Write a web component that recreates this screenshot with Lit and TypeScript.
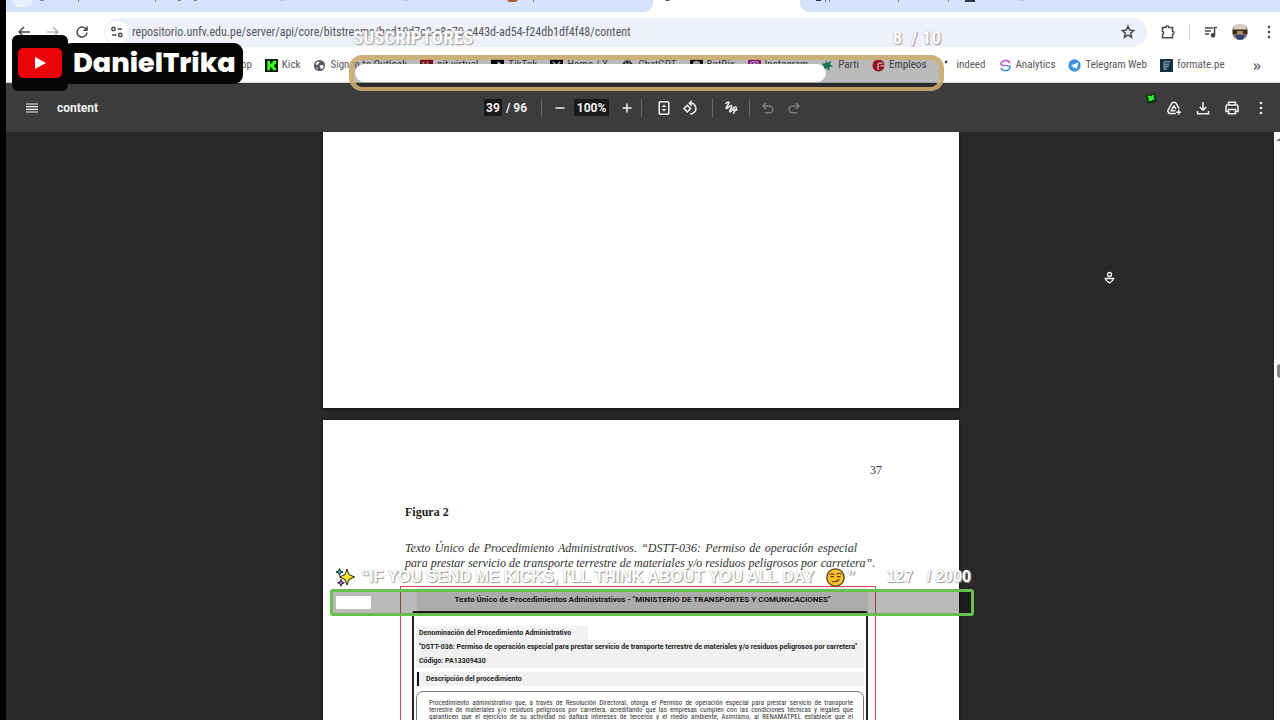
import { LitElement, html, css, svg } from "lit";
import { customElement, property } from "lit/decorators.js";

const icons: Record<string, unknown> = {
  back: svg`<path d="M14 8H3M8 3L3 8l5 5"/>`,
  forward: svg`<path d="M2 8h11M8 3l5 5-5 5"/>`,
  reload: svg`<path d="M12.6 6A5 5 0 1 0 13 8.6M13 2.5V6.200H9.300"/>`,
  tune: svg`<circle cx="4.500" cy="5" r="1.700"/><path d="M8.500 5H13M3 11h4.500"/><circle cx="11.300" cy="11" r="1.700"/>`,
  star: svg`<path d="M8 2.400l1.700 3.700 4 .4-3 2.700.9 4L8 11.100l-3.600 2.100.9-4-3-2.700 4-.4z"/>`,
  puzzle: svg`<path d="M2.500 3.500h3.300a1.500 1.500 0 0 1 3 0h3.700v3.700a1.500 1.500 0 0 1 0 3v3.600h-10v-3.600a1.600 1.600 0 0 0 0-3z"/>`,
  music: svg`<path d="M2 4h8M2 7h6M2 10h4M11.500 11V3.500H14"/><circle cx="10" cy="11.300" r="1.600" fill="currentColor"/>`,
  more: svg`<g fill="currentColor" stroke="none"><circle cx="8" cy="3" r="1.300"/><circle cx="8" cy="8" r="1.300"/><circle cx="8" cy="13" r="1.300"/></g>`,
  menu: svg`<path d="M2 4h12M2 6.700h12M2 9.300h12M2 12h12" stroke-width="1.200"/>`,
  minus: svg`<path d="M3.500 8h9"/>`,
  plus: svg`<path d="M3.500 8h9M8 3.500v9"/>`,
  fit: svg`<rect x="3.200" y="1.700" width="9.600" height="12.600" rx="1.200"/><path d="M6.400 6.600L8 4.800l1.600 1.800zM6.400 9.400L8 11.200l1.600-1.800z" fill="currentColor" stroke-width=".8"/>`,
  rotate: svg`<path d="M5.300 5.300L8.600 8.600 5.300 11.900 2 8.600z"/><path d="M7.500 3.200a5.400 5.400 0 1 1 .8 10.700M9.700.8L7.300 3.200l2.400 2.400"/>`,
  ink: svg`<path d="M2.500 3.800C4 2.300 6 1.300 6 2.800 6 4.500 2.500 7 3.200 8.300c.9 1.200 4-3.600 5.400-2.600 1.400 1.200-2.800 4.600-1.700 6 1.200 1.300 3-4.700 5.300-4.800 1.900.1 1.300 2.600-.3 4-1.500 1.200-1.300 2.300-.7 2.900M10 9.900h4.500"/>`,
  undo: svg`<path d="M3 6h6.500a3.400 3.400 0 0 1 0 6.800H5M6 3L3 6l3 3"/>`,
  redo: svg`<path d="M13 6H6.500a3.400 3.400 0 0 0 0 6.800H11M10 3l3 3-3 3"/>`,
  drive: svg`<path d="M9.800 13.500H3.200L1.700 11 6.300 2.500h3.300l3.500 6.200M8 5.700L5.200 10.700h4.200M8 5.700l1.900 3.500M12.700 9.700v5M10.200 12.200h5"/>`,
  download: svg`<path d="M8 2v8M4.700 7L8 10.300 11.300 7M2.500 11v2.800h11V11"/>`,
  print: svg`<path d="M4.500 5V2.300h7V5M4.500 11.500H2V6.700C2 5.700 2.700 5 3.600 5h8.800c.9 0 1.600.7 1.600 1.700v4.800h-2.500M4.500 9.500h7v4.300h-7z"/>`,
};

const favicons: Record<string, unknown> = {
  kick: svg`<path fill="#0b1a06" d="M0 0h14v14H0z"/><path fill="#3dfb20" d="M2.500 2h3v3H7V3.500h1.500V2H12v3.500h-1.500V7H9.500v1h1v1.500H12V12H8.500v-1.500H7V9H5.500v3h-3z"/>`,
  globe: svg`<circle cx="7" cy="7" r="6" fill="#55585c"/><path fill="#fff" d="M2.500 5l3-2.500 1.500 1-1 2-2 1zM7 7l3-.5 2 1-2 3.500-2-1zM3 8.500l2 1 .5 2z"/>`,
  nit: svg`<path fill="#a3122b" d="M0 0h14v14H0z"/><path fill="#e7b8bf" d="M2 3h2l1 2-1 2zM7 3h2v2H7z"/>`,
  tiktok: svg`<path fill="#050505" d="M0 0h14v14H0z"/><path fill="#fff" d="M7 3h2c.2 1.200 1 2 2 2v1.800L9 6.200v2.600A2.600 2.600 0 1 1 6.400 6.200v1.500a1 1 0 1 0 .6 1z"/>`,
  x: svg`<path fill="#050505" d="M0 0h14v14H0z"/><path stroke="#fff" stroke-width="1.300" fill="none" d="M3 3l7.500 8M11 3l-8 8"/>`,
  gpt: svg`<g fill="none" stroke="#3b3d40" stroke-width="1.200"><circle cx="7" cy="7" r="5"/><path d="M3 5l4-2 4 2.500v4L7 11 3 9zM7 3v4l4 2.500M7 7L3 9"/></g>`,
  botrix: svg`<path fill="#171717" d="M0 0h14v14H0z"/><circle cx="7" cy="6" r="4" fill="#d9cfc7"/><path fill="#8b4f55" d="M4 6h6v4H4z"/>`,
  insta: svg`<rect width="14" height="14" rx="3" fill="#b81fa4"/><g fill="none" stroke="#fff" stroke-width="1.200"><rect x="3" y="3" width="8" height="8" rx="2"/><circle cx="7" cy="7" r="2"/></g>`,
  parti: svg`<path fill="#25a37c" d="M5 1l2 3 4-2-1 4 3 2-4 1v4L6 10l-4 2 1-4-2-3 4-.5z"/>`,
  empleos: svg`<circle cx="7" cy="7" r="6.500" fill="#d3142c"/><path fill="none" stroke="#fff" stroke-width="1.400" d="M11.500 4.500H8a2 2 0 0 0-1 3.500 2 2 0 0 0 .5 3.500M9 7.500h5"/>`,
  indeed: svg`<path fill="#444" d="M6 2h3v2L7 5z"/>`,
  analytics: svg`<g fill="none" stroke-width="1.700"><path stroke="#c653d8" d="M12 4.500A5.500 5.500 0 0 0 2 5c0 2 3 2 5 2"/><path stroke="#4a9ade" d="M2 9.500A5.500 5.500 0 0 0 12 9c0-2-3-2-5-2"/></g>`,
  telegram: svg`<circle cx="7" cy="7" r="6.600" fill="#3f8fd8"/><path fill="#fff" d="M3 7l8-3.300L9.500 10.800 7 9l-1.300 1.200L5.500 8z"/>`,
  formate: svg`<path fill="#12303f" d="M0 0h14v14H0z"/><path fill="none" stroke="#a9bcc6" d="M4.500 12V3H11M6.500 12V5.500H10M7 8h2.500"/>`,
};

const bookmarks: [string, string][] = [
  ["kick", "Kick"], ["globe", "Sign in to Outlook"], ["nit", "nit-virtual"], ["tiktok", "TikTok"],
  ["x", "Home / X"], ["gpt", "ChatGPT"], ["botrix", "BotRix"], ["insta", "Instagram"], ["parti", "Parti"],
  ["empleos", "Empleos"], ["indeed", "indeed"], ["analytics", "Analytics"], ["telegram", "Telegram Web"],
  ["formate", "formate.pe"],
];

const icon = (name: string) => html`<svg class="icon" viewBox="0 0 16 16" aria-hidden="true">${icons[name]}</svg>`;
const iconButton = (name: string, label: string, cls = "") =>
  html`<button class="ib ${cls}" aria-label=${label}>${icon(name)}</button>`;

const shared = css`
  * { box-sizing: border-box; }
  button { border: 0; padding: 0; background: none; color: inherit; font: inherit; }
  .ib { display: grid; place-items: center; width: 16px; height: 16px; flex: none; }
  .icon { width: 16px; height: 16px; fill: none; stroke: currentColor; stroke-width: 1.500; display: block; }
`;

@customElement("browser-chrome")
export class BrowserChrome extends LitElement {
  static styles = [shared, css`
    :host { display: block; background: #fff; font-family: "Roboto Condensed", Roboto, sans-serif; color: #46494d; border-bottom: 1px solid #d5d7da; }
    .tabs { display: grid; grid-template-columns: 647fr 147fr 480fr; height: 12px; background: #fff; }
    .group { background: #d5e2fb; display: flex; align-items: flex-start; }
    .group.first { border-bottom-right-radius: 9px; padding-left: 6px; }
    .group.last { border-bottom-left-radius: 9px; }
    .active { padding-left: 12px; }
    .search { width: 21px; height: 7px; border-radius: 0 0 9px 9px; background: #e9f0fd; }
    .marks { flex: 1; height: 3px; min-width: 0; }
    .marks svg, .active svg { display: block; width: 100%; height: 3px; }
    .bar { display: flex; align-items: center; height: 40px; padding: 0 3px 0 10px; }
    .nav { display: flex; gap: 13px; margin-right: 14px; }
    .dim { color: #b4b6b9; }
    .omni { flex: 1; min-width: 0; height: 29px; border-radius: 15px; background: #eef1fa; display: flex; align-items: center; padding: 0 11px 0 1px; }
    .site { width: 23px; height: 23px; border-radius: 50%; background: #fff; display: grid; place-items: center; flex: none; }
    .url { flex: 1; min-width: 0; border: 0; background: none; outline: 0; padding: 0; margin-left: 4px; font: 12px/16px "Roboto Condensed", Roboto, sans-serif; color: #55585e; }
    .tools { display: flex; align-items: center; gap: 13px; margin-left: 13px; }
    .sep { width: 1px; height: 14px; background: #cfd5e4; }
    .avatar { width: 16px; height: 16px; display: block; }
    .marksbar { display: flex; align-items: center; height: 30px; padding: 0 19px 4px 235px; font-size: 11px; line-height: 16px; }
    .list { flex: 1; min-width: 0; display: flex; gap: 13px; overflow: hidden; }
    a { display: flex; align-items: center; gap: 4px; color: #55585c; text-decoration: none; white-space: nowrap; }
    .fav { width: 13px; height: 13px; display: block; }
    .more { font: 16px/16px "Open Sans", sans-serif; }
  `];
  render() {
    return html`
      <div class="tabs">
        <div class="group first"><div class="search"></div><div class="marks">
          <svg viewBox="0 0 620 3" preserveAspectRatio="none"><g fill="#7b8496"><path d="M7 0h4v1H7zM45 0h1v2h-1zM122 0h1v2h-1zM145 0h3v1h-3zM161 0h3v1h-3zM248 0h1v1h-1zM373 0h1v1h-1zM500 0h1v2h-1z"/></g><path fill="#b5583a" d="M474 0h11l-2 2h-7z"/></svg>
        </div></div>
        <div class="active"><svg viewBox="0 0 135 3" preserveAspectRatio="none"><path fill="#555" d="M0 0h5l-1 1H1z"/></svg></div>
        <div class="group last"><div class="marks">
          <svg viewBox="0 0 480 3" preserveAspectRatio="none"><g fill="#7b8496"><path d="M25 0h1v2h-1zM29 0h1v2h-1zM98 0h1v2h-1zM148 0h1v2h-1zM169 0h4v1h-4zM222 0h1v1h-1z"/></g><path fill="#2d3340" d="M16 0h5v1h-5zM165 0h10v2h-10z" /></svg>
        </div></div>
      </div>
      <div class="bar">
        <div class="nav">${iconButton("back", "Back")}${iconButton("forward", "Forward", "dim")}${iconButton("reload", "Reload")}</div>
        <div class="omni">
          <div class="site">${iconButton("tune", "Site information")}</div>
          <input class="url" aria-label="Address" .value=${"repositorio.unfv.edu.pe/server/api/core/bitstreams/bad10d7e2-c8a70-c443d-ad54-f24db1df4f48/content"}>
          ${iconButton("star", "Bookmark this page")}
        </div>
        <div class="tools">
          ${iconButton("puzzle", "Extensions")}<div class="sep"></div>${iconButton("music", "Media controls")}
          <svg class="avatar" viewBox="0 0 16 16"><circle cx="8" cy="8" r="8" fill="#8a7a6c"/><path fill="#d8d2c6" d="M2 5a6 6 0 0 1 12 0z"/><path fill="#3b2c26" d="M1 6h14v4H1z"/><path fill="#b98a6c" d="M5 7h6v3H5z"/><path fill="#2b4873" d="M3 11h10l-2 4.500H5.500z"/></svg>
          ${iconButton("more", "Menu")}
        </div>
      </div>
      <div class="marksbar">
        <nav class="list"><a href="#">pp</a>${bookmarks.map(([k, t]) => html`<a href="#"><svg class="fav" viewBox="0 0 14 14">${favicons[k]}</svg>${t}</a>`)}</nav>
        <button class="more" aria-label="More bookmarks">»</button>
      </div>`;
  }
}

@customElement("pdf-toolbar")
export class PdfToolbar extends LitElement {
  static styles = [shared, css`
    :host { display: grid; grid-template-columns: 1fr auto 1fr; align-items: center; height: 49px; background: #3c3c3c; color: #f1f1f1; font: bold 12px/16px Roboto, sans-serif; padding: 0 11px 0 18px; }
    .side, .mid { display: flex; align-items: center; }
    .side { gap: 17px; }
    .end { justify-content: flex-end; gap: 13px; }
    .mid { gap: 10px; margin-left: -7px; }
    .pages { display: flex; align-items: center; gap: 4px; margin-right: 4px; }
    input { border: 0; padding: 0; background: #191919; color: #f1f1f1; font: inherit; height: 17px; text-align: center; }
    .page { width: 18px; }
    .zoom { width: 35px; }
    .small { width: 12px; }
    .sep { width: 1px; height: 18px; background: #6b6b6b; }
    .dim { color: #7d7d7d; }
    .first { margin-left: 4px; }
    .last { margin-right: 4px; }
  `];
  render() {
    return html`
      <div class="side">${iconButton("menu", "Sidebar")}<span>content</span></div>
      <div class="mid">
        <label class="pages"><input class="page" aria-label="Page" .value=${"39"}><span>/ 96</span></label>
        <div class="sep"></div>
        ${iconButton("minus", "Zoom out", "small")}
        <input class="zoom" aria-label="Zoom" .value=${"100%"}>
        ${iconButton("plus", "Zoom in", "small")}
        <div class="sep"></div>
        ${iconButton("fit", "Fit to page", "first")}${iconButton("rotate", "Rotate", "last")}
        <div class="sep"></div>
        ${iconButton("ink", "Draw")}
        <div class="sep"></div>
        ${iconButton("undo", "Undo", "dim")}${iconButton("redo", "Redo", "dim")}
      </div>
      <div class="side end">${iconButton("drive", "Save to Drive")}${iconButton("download", "Download")}${iconButton("print", "Print")}${iconButton("more", "More")}</div>`;
  }
}

@customElement("pdf-viewer")
export class PdfViewer extends LitElement {
  static styles = [shared, css`
    :host { display: flex; overflow: hidden; background: #282828; min-height: 0; }
    .pages { flex: 1; min-width: 0; display: flex; flex-direction: column; align-items: center; gap: 12px; padding-left: 2px; }
    .sheet { width: 636px; max-width: 100%; background: #fff; flex: none; box-shadow: 0 1px 3px #111; }
    .blank { height: 276px; }
    .doc { padding: 43px 77px 0 82px; font: 12px/14px "Liberation Serif", serif; color: #333; }
    .num { text-align: right; margin: 0 0 28px; }
    h2 { font: bold 12px/14px "Liberation Serif", serif; color: #222; margin: 0 0 22px; }
    .cap { font-style: italic; line-height: 15px; margin: 0 0 15px; white-space: nowrap; width: 452px; }
    .cap span { display: block; }
    .cap .just { white-space: normal; text-align-last: justify; }
    .fig { width: 476px; margin-left: -5px; border: 1px solid #d8485a; border-bottom: 0; padding: 0 7px 0 11px; font: bold 7px/14px Roboto, sans-serif; color: #222; }
    .head { margin: 0 0 0 5px; background: #ececec; font-size: 8px; line-height: 22px; padding-top: 2px; text-align: center; }
    .box { border: 2px solid #222; border-bottom: 0; border-radius: 3px 3px 0 0; padding: 13px 2px 0; }
    .box p { margin: 0; padding-left: 3px; white-space: nowrap; }
    .box .name { width: 172px; background: #f3f3f3; }
    .gray { background: #f1f1f1; margin-bottom: 4px; }
    .desc { display: flex; background: #f1f1f1; margin-bottom: 5px; }
    .desc::before { content: ""; width: 2px; background: #111; margin-left: 1px; }
    .desc p { padding-left: 7px; }
    .text { border: 1px solid #777; border-radius: 7px 7px 0 0; padding: 8px 10px 0 12px; font: 7px/7px "Roboto Condensed", Roboto, sans-serif; color: #333; }
    .text span { display: block; text-align-last: justify; white-space: nowrap; }
    .scroll { width: 6px; background: #fcfcfc; display: flex; flex-direction: column; align-items: flex-end; padding-top: 6px; gap: 222px; }
    .scroll svg { width: 4px; height: 4px; display: block; }
    .thumb { width: 3px; height: 14px; border-radius: 4px 0 0 4px; background: #8b8b8b; }
  `];
  render() {
    return html`
      <main class="pages">
        <section class="sheet blank"></section>
        <section class="sheet doc">
          <p class="num">37</p>
          <h2>Figura 2</h2>
          <p class="cap"><span class="just">Texto Único de Procedimiento Administrativos. “DSTT-036: Permiso de operación especial</span><span>para prestar servicio de transporte terrestre de materiales y/o residuos peligrosos por carretera”.</span></p>
          <div class="fig">
            <div class="head">Texto Único de Procedimientos Administrativos - "MINISTERIO DE TRANSPORTES Y COMUNICACIONES"</div>
            <div class="box">
              <p class="name">Denominación del Procedimiento Administrativo</p>
              <div class="gray">
                <p>"DSTT-036: Permiso de operación especial para prestar servicio de transporte terrestre de materiales y/o residuos peligrosos por carretera"</p>
                <p>Código: PA13309430</p>
              </div>
              <div class="desc"><p>Descripción del procedimiento</p></div>
              <div class="text">
                <span>Procedimiento administrativo que, a través de Resolución Directoral, otorga el Permiso de operación especial para prestar servicio de transporte</span>
                <span>terrestre de materiales y/o residuos peligrosos por carretera, acreditando que las empresas cumplen con las condiciones técnicas y legales que</span>
                <span>garanticen que el ejercicio de su actividad no dañará intereses de terceros y el medio ambiente, Asimismo, al RENAMATPEL establece que el</span>
              </div>
            </div>
          </div>
        </section>
      </main>
      <div class="scroll"><svg viewBox="0 0 4 4"><path d="M0 3l4-3v3z" fill="#777"/></svg><div class="thumb"></div></div>`;
  }
}

@customElement("goal-bar")
export class GoalBar extends LitElement {
  @property({ type: Number }) value = 0;
  @property({ type: Number }) max = 1;
  @property({ type: Number }) percent = 0;
  static styles = css`
    * { box-sizing: border-box; }
    :host { display: block; color: #fff; }
    .row { display: flex; align-items: center; justify-content: space-between; white-space: pre; text-shadow: 0 0 1px #999, 1px 1px 1px #999; }
    .title { display: flex; align-items: center; }
    .track { background: rgba(0, 0, 0, .27); }
    .fill { height: 100%; background: #fff; }
    :host(.subs) .row { font: bold 19px/24px "Roboto Condensed", "Liberation Sans", sans-serif; padding: 0 3px 0 4px; margin-bottom: 5px; }
    :host(.subs) .track { height: 36px; padding: 4px 0 5px 1px; border: 5px solid rgba(200, 168, 108, .9); border-bottom-width: 4px; border-radius: 13px; background-clip: padding-box; }
    :host(.subs) .fill { border-radius: 10px; }
    :host(.kicks) .row { font: bold 16px/20px "Liberation Sans", sans-serif; padding: 0 3px 0 5px; margin-bottom: 2px; }
    :host(.kicks) .track { height: 27px; padding: 4px 3px; border: 3px solid #66c14e; border-radius: 3px; background-clip: padding-box; }
    :host(.kicks) .fill { border-radius: 1px; }
  `;
  render() {
    return html`
      <div class="row"><span class="title"><slot></slot></span><span>${this.value}${this.max > 100 ? "   " : "  "}/ ${this.max}</span></div>
      <div class="track" role="progressbar" aria-valuenow=${this.value} aria-valuemax=${this.max}>
        <div class="fill" style="width:${this.percent}%"></div>
      </div>`;
  }
}

@customElement("app-root")
export class AppRoot extends LitElement {
  static styles = css`
    * { box-sizing: border-box; }
    :host { display: block; position: relative; height: 100vh; overflow: hidden; background: #000; padding-left: 6px; }
    .window { display: flex; flex-direction: column; height: 100%; }
    pdf-viewer { flex: 1; }
    .over { position: absolute; }
    .brand { left: 12px; top: 35px; display: flex; align-items: center; }
    .logo { width: 56px; height: 56px; border-radius: 6px; background: #050505; display: grid; place-items: center; }
    .logo svg { width: 46px; height: 34px; display: block; }
    .name { height: 41px; margin-left: -6px; padding: 0 7px 0 11px; border-radius: 9px; background: #050505; color: #fff; font: 800 27px/39px Poppins, Inter, sans-serif; }
    .subs { left: 349px; top: 26px; width: 595px; }
    .kicks { left: 330px; top: 567px; width: 644px; }
    .spark { width: 20px; height: 20px; margin-right: 6px; }
    .face { width: 19px; height: 19px; margin: 0 2px 0 12px; }
    .cube { left: 1145px; top: 93px; width: 12px; height: 12px; }
    .cursor { left: 1104px; top: 271px; width: 11px; height: 14px; }
  `;
  render() {
    return html`
      <div class="window"><browser-chrome></browser-chrome><pdf-toolbar></pdf-toolbar><pdf-viewer></pdf-viewer></div>
      <div class="over brand">
        <div class="logo"><svg viewBox="0 0 46 34"><rect x="1" y="2" width="44" height="30" rx="5" fill="#e90208"/><path d="M18 11v12l11-6z" fill="#fff"/></svg></div>
        <div class="name">DanielTrika</div>
      </div>
      <goal-bar class="over subs" .value=${8} .max=${10} .percent=${80.6}>SUSCRIPTORES</goal-bar>
      <goal-bar class="over kicks" .value=${127} .max=${2000} .percent=${5.6}><svg class="spark" viewBox="0 0 20 20"><g stroke="#222" stroke-width="1"><path fill="#ffe32e" d="M12 2l2 5.500 5.500 2.500-5.500 2.500L12 18l-2-5.500L4.500 10 10 7.500z"/><path fill="#35c3b0" d="M4.500 1.500l1 2.500 2.500 1-2.500 1-1 2.500-1-2.500L1 5l2.500-1z"/><path fill="#b66ce0" d="M6 12.500l1 2.300 2.300 1L7 16.800l-1 2.400-1-2.400-2.300-1 2.300-1z"/></g></svg>“IF YOU SEND ME KICKS, I'LL THINK ABOUT YOU ALL DAY<svg class="face" viewBox="0 0 19 19"><circle cx="9.500" cy="9.500" r="8.700" fill="#fbc02c" stroke="#4f3a13" stroke-width="1.300"/><g fill="none" stroke="#5a3a10" stroke-width="1.200" stroke-linecap="round"><path d="M4 6.500q2-1.500 4 0M11 6q2-1.500 4 0M6.500 13.500q4 1 6.500-2M5 8.700h2.500M11.500 8.700H14"/></g></svg>”</goal-bar>
      <svg class="over cube" viewBox="0 0 12 12"><path d="M1 2l9-1.500L11.500 9l-9 2z" fill="#062b06"/><path d="M2.500 3l2.500-.4 1 1 1-1.400 2.300-.2-.7 2.500 1.400 2.500-2.500-.4-1.500 2-.8-1.200-2.200.8.800-2.500z" fill="#2bf52b"/></svg>
      <svg class="over cursor" viewBox="0 0 11 14"><g fill="none" stroke="#fff" stroke-width="1.300"><circle cx="5.500" cy="3.500" r="2"/><path d="M1.300 7.500h8.400q-.2 1.800-4.200 4.500-4-2.700-4.200-4.500z"/></g></svg>`;
  }
}
